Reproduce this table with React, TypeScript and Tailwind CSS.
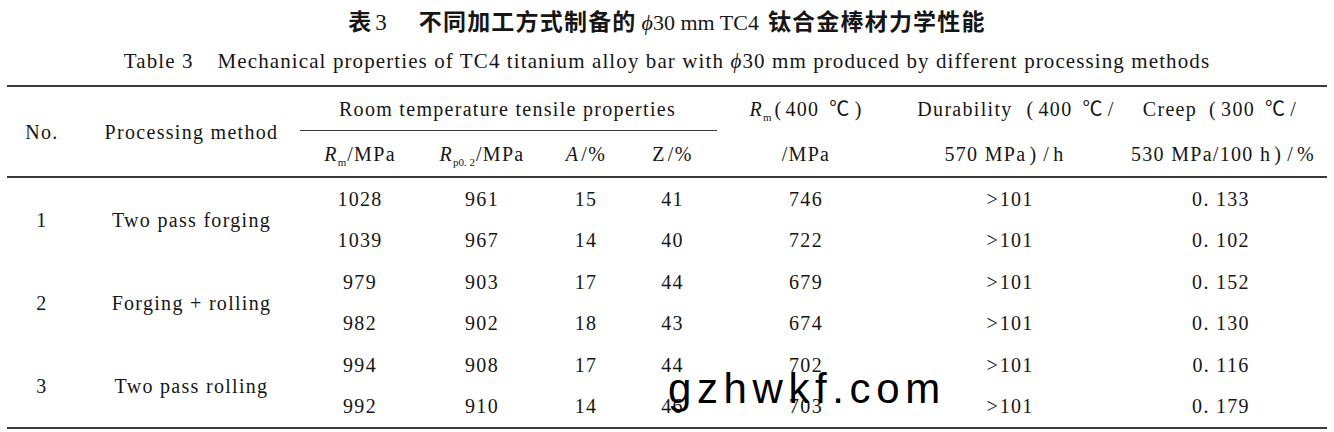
import React from "react";

const serif = { fontFamily: '"Liberation Serif", "Noto Sans CJK SC", serif' };
const cjk = { fontFamily: '"Noto Sans CJK SC", "Noto Sans", sans-serif' };

const groups = [
  {
    no: "1",
    method: "Two pass forging",
    rows: [
      ["1028", "961", "15", "41", "746", "101", "0. 133"],
      ["1039", "967", "14", "40", "722", "101", "0. 102"],
    ],
  },
  {
    no: "2",
    method: "Forging + rolling",
    rows: [
      ["979", "903", "17", "44", "679", "101", "0. 152"],
      ["982", "902", "18", "43", "674", "101", "0. 130"],
    ],
  },
  {
    no: "3",
    method: "Two pass rolling",
    rows: [
      ["994", "908", "17", "44", "702", "101", "0. 116"],
      ["992", "910", "14", "46", "703", "101", "0. 179"],
    ],
  },
];

const cols =
  "grid grid-cols-[70px_223px_120px_124px_84px_89px_178px_225px_208px]";

function Rsub({ sub }: { sub: string }) {
  return (
    <span>
      <span className="italic">R</span>
      <span className="relative top-[5px] text-[11px] tracking-normal">{sub}</span>
    </span>
  );
}

export default function App() {
  return (
    <div
      className="relative w-[1334px] h-[432px] overflow-hidden bg-white text-[#161616]"
      style={serif}
    >
      {/* Title */}
      <div className="h-[42px] flex items-center justify-center">
        <div className="flex items-baseline text-[23px] leading-none">
          <span className="font-bold" style={cjk}>
            表
          </span>
          <span className="ml-[4px]" style={serif}>
            3
          </span>
          <span className="ml-[32px] font-bold tracking-[1.2px]" style={cjk}>
            不同加工方式制备的
          </span>
          <span className="ml-[5px] text-[22px]" style={serif}>
            <span className="italic">ϕ</span>30 mm TC4
          </span>
          <span className="ml-[9px] font-bold tracking-[1.2px]" style={cjk}>
            钛合金棒材力学性能
          </span>
        </div>
      </div>

      {/* Subtitle */}
      <div className="h-[38px] flex items-center justify-center text-[21px] leading-none tracking-[1.1px]">
        <span>Table 3</span>
        <span className="ml-[24px]">
          Mechanical properties of TC4 titanium alloy bar with{" "}
          <span className="italic">ϕ</span>30 mm produced by different processing methods
        </span>
      </div>

      {/* Table */}
      <div className="mt-[5px] mx-[7px] border-t-2 border-b-2 border-[#3a3a3a] text-[20px] leading-none tracking-[1.3px]">
        {/* Header */}
        <div className={`${cols} grid-rows-[44px_45px] border-b-2 border-[#3a3a3a]`}>
          <div className="row-span-2 flex items-center justify-center">No.</div>
          <div className="row-span-2 flex items-center justify-center pl-[6px]">
            Processing method
          </div>
          <div className="col-span-4 flex items-center justify-center border-b border-[#3a3a3a] pr-[2px]">
            Room temperature tensile properties
          </div>
          <div className="flex items-center justify-center">
            <Rsub sub="m" />
            <span className="ml-[3px]">(</span>
            <span className="ml-[3px]">400</span>
            <span className="ml-[10px]">℃</span>
            <span className="ml-[4px]">)</span>
          </div>
          <div className="flex items-center justify-center pl-[17px]">
            <span>Durability</span>
            <span className="ml-[14px]">(</span>
            <span className="ml-[4px]">400</span>
            <span className="ml-[10px]">℃</span>
            <span className="ml-[4px]">/</span>
          </div>
          <div className="flex items-center justify-center pr-[8px]">
            <span>Creep</span>
            <span className="ml-[12px]">(</span>
            <span className="ml-[4px]">300</span>
            <span className="ml-[10px]">℃</span>
            <span className="ml-[4px]">/</span>
          </div>

          <div className="flex items-center justify-center">
            <Rsub sub="m" />
            <span className="ml-[1px]">/MPa</span>
          </div>
          <div className="flex items-center justify-center">
            <Rsub sub="p0. 2" />
            <span className="ml-[1px]">/MPa</span>
          </div>
          <div className="flex items-center justify-center">
            <span className="italic">A</span>
            <span className="ml-[2px]">/%</span>
          </div>
          <div className="flex items-center justify-center">
            <span>Z</span>
            <span className="ml-[2px]">/%</span>
          </div>
          <div className="flex items-center justify-center">/MPa</div>
          <div className="flex items-center justify-center pr-[6px]">
            <span>570 MPa</span>
            <span className="ml-[3px]">)</span>
            <span className="ml-[6px]">/</span>
            <span className="ml-[3px]">h</span>
          </div>
          <div className="flex items-center justify-center pr-[2px]">
            <span>530 MPa/100 h</span>
            <span className="ml-[3px]">)</span>
            <span className="ml-[5px]">/</span>
            <span className="ml-[3px]">%</span>
          </div>
        </div>

        {/* Body */}
        {groups.map((g, gi) => (
          <div key={gi} className={`${cols} grid-rows-[41px_42px]`}>
            <div className="row-span-2 flex items-center justify-center">{g.no}</div>
            <div className="row-span-2 flex items-center justify-center pl-[6px]">
              {g.method}
            </div>
            {g.rows.map((r, ri) => (
              <React.Fragment key={ri}>
                <div className="flex items-center justify-center">{r[0]}</div>
                <div className="flex items-center justify-center">{r[1]}</div>
                <div className="flex items-center justify-center">{r[2]}</div>
                <div className="flex items-center justify-center">{r[3]}</div>
                <div className="flex items-center justify-center">{r[4]}</div>
                <div className="flex items-center justify-center pl-[5px]">
                  <span className="tracking-normal">&gt;</span>
                  <span className="ml-[2px]">{r[5]}</span>
                </div>
                <div className="flex items-center justify-center pr-[6px]">{r[6]}</div>
              </React.Fragment>
            ))}
          </div>
        ))}
      </div>

      {/* Watermark */}
      <div
        className="absolute left-[668px] top-[368px] text-[42px] leading-none tracking-[5.6px] text-black"
        style={{ fontFamily: '"Liberation Sans", Arial, sans-serif' }}
      >
        gzhwkf.com
      </div>
    </div>
  );
}
